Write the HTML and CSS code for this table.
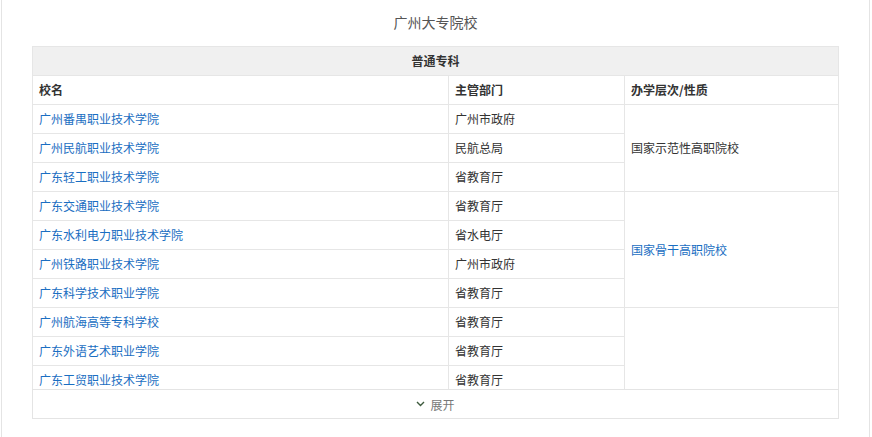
FILE: index.html
```html
<!DOCTYPE html>
<html lang="zh">
<head>
<meta charset="utf-8">
<link rel="stylesheet" href="styles.css">
</head>
<body>
<div class="panel">
  <h2 class="title">广州大专院校</h2>
  <div class="clip">
    <table class="schools">
      <colgroup><col class="c1"><col class="c2"><col class="c3"></colgroup>
      <tr class="cat"><th colspan="3">普通专科</th></tr>
      <tr class="head"><th>校名</th><th>主管部门</th><th>办学层次/性质</th></tr>
      <tr><td><a href="#">广州番禺职业技术学院</a></td><td>广州市政府</td><td rowspan="3">国家示范性高职院校</td></tr>
      <tr><td><a href="#">广州民航职业技术学院</a></td><td>民航总局</td></tr>
      <tr><td><a href="#">广东轻工职业技术学院</a></td><td>省教育厅</td></tr>
      <tr><td><a href="#">广东交通职业技术学院</a></td><td>省教育厅</td><td rowspan="4"><a href="#">国家骨干高职院校</a></td></tr>
      <tr><td><a href="#">广东水利电力职业技术学院</a></td><td>省水电厅</td></tr>
      <tr><td><a href="#">广州铁路职业技术学院</a></td><td>广州市政府</td></tr>
      <tr><td><a href="#">广东科学技术职业学院</a></td><td>省教育厅</td></tr>
      <tr><td><a href="#">广州航海高等专科学校</a></td><td>省教育厅</td><td rowspan="3"></td></tr>
      <tr><td><a href="#">广东外语艺术职业学院</a></td><td>省教育厅</td></tr>
      <tr><td><a href="#">广东工贸职业技术学院</a></td><td>省教育厅</td></tr>
    </table>
  </div>
  <div class="more"><svg class="chev" width="9" height="6" viewBox="0 0 9 6"><path d="M1 1 L4.5 4.5 L8 1" fill="none" stroke="#3d5a3d" stroke-width="1.4"/></svg><span>展开</span></div>
</div>
</body>
</html>
```
FILE: styles.css
```css
html, body {
  margin: 0;
  padding: 0;
  background: #fff;
}
body {
  font-family: "Noto Sans CJK SC", "Noto Sans", sans-serif;
  font-size: 12px;
  color: #333;
}
.panel {
  margin-left: 1px;
  width: 807px;
  padding: 12px 30px 18px;
  border: 1px solid #e4e4e4;
  border-top: none;
}
.title {
  margin: 0 0 14px;
  height: 20px;
  line-height: 20px;
  text-align: center;
  font-size: 14px;
  font-weight: normal;
  color: #555;
}
.clip {
  height: 343px;
  overflow: hidden;
}
.schools {
  width: 807px;
  border-collapse: separate;
  border-spacing: 0;
  table-layout: fixed;
  border-left: 1px solid #e6e6e6;
  border-top: 1px solid #e6e6e6;
}
.c1 { width: 416px; }
.c2 { width: 176px; }
.c3 { width: 214px; }
.schools th, .schools td {
  border: 0;
  border-right: 1px solid #e6e6e6;
  border-bottom: 1px solid #e6e6e6;
  padding: 0 6px;
  text-align: left;
  vertical-align: middle;
  line-height: 16px;
  box-sizing: border-box;
  height: 29px;
}
.schools th {
  font-weight: bold;
  color: #333;
}
.schools .cat th {
  background: #f0f0f0;
  text-align: center;
}
.schools a {
  color: #1a6ec2;
  text-decoration: none;
}
.more {
  height: 28px;
  border: 1px solid #e4e4e4;
  display: flex;
  align-items: center;
  justify-content: center;
  gap: 5px;
  color: #777;
}
.chev {
  display: block;
}
```
